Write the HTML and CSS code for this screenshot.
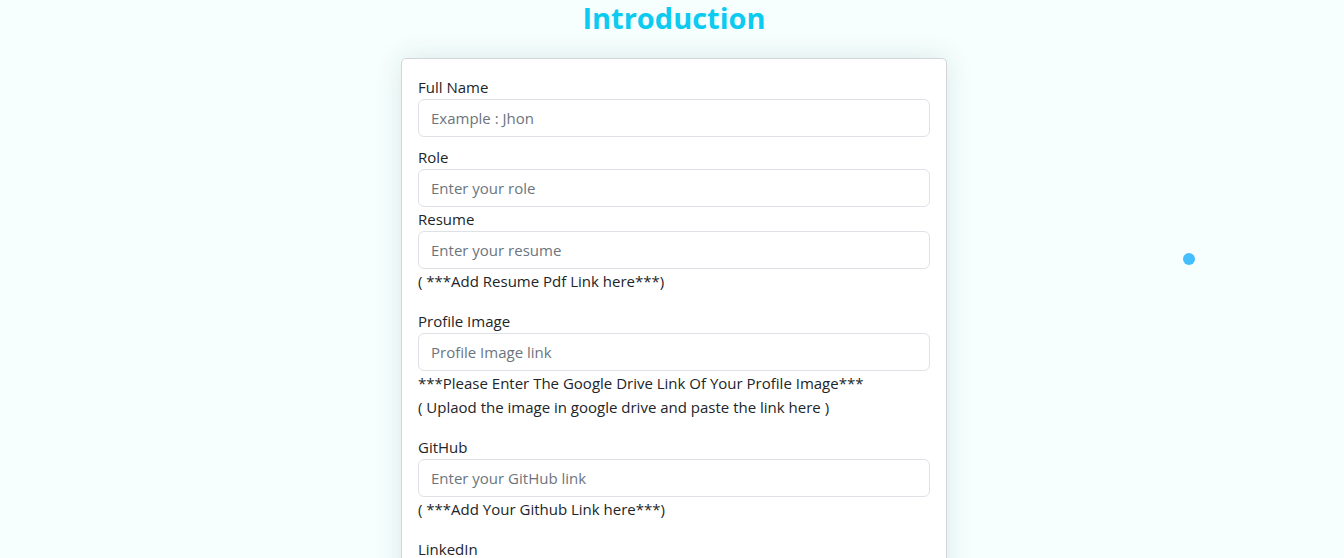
FILE: index.html
```html
<!DOCTYPE html>
<html lang="en">
<head>
<meta charset="utf-8">
<title>Introduction</title>
<link rel="stylesheet" href="styles.css">
</head>
<body>
<h1 class="title">Introduction</h1>
<form class="card">
  <div class="field gap">
    <label class="label">Full Name</label>
    <input class="input" type="text" placeholder="Example : Jhon">
  </div>
  <div class="field">
    <label class="label">Role</label>
    <input class="input" type="text" placeholder="Enter your role">
  </div>
  <div class="field">
    <label class="label">Resume</label>
    <input class="input" type="text" placeholder="Enter your resume">
    <p class="help">( ***Add Resume Pdf Link here***)</p>
  </div>
  <div class="field">
    <label class="label">Profile Image</label>
    <input class="input" type="text" placeholder="Profile Image link">
    <p class="help">***Please Enter The Google Drive Link Of Your Profile Image***<br>( Uplaod the image in google drive and paste the link here )</p>
  </div>
  <div class="field">
    <label class="label">GitHub</label>
    <input class="input" type="text" placeholder="Enter your GitHub link">
    <p class="help">( ***Add Your Github Link here***)</p>
  </div>
  <div class="field">
    <label class="label">LinkedIn</label>
    <input class="input" type="text" placeholder="Enter your LinkedIn link">
  </div>
</form>
<div class="cursor-dot"></div>
</body>
</html>
```
FILE: styles.css
```css
html, body {
  margin: 0;
  padding: 0;
}
body {
  background: #f6fffe;
  font-family: "Open Sans", "Noto Sans", sans-serif;
  font-size: 15px;
  color: #212529;
  overflow: hidden;
  height: 558px;
  padding-left: 4px;
  box-sizing: border-box;
}
.title {
  margin: 0;
  padding-top: 1px;
  height: 36px;
  line-height: 34px;
  text-align: center;
  color: #0dcaf0;
  font-size: 29px;
  font-weight: 700;
}
.card {
  display: block;
  width: 512px;
  margin: 21px auto 0;
  padding: 16px 16px 16px;
  background: #fff;
  border: 1px solid #d3d6d8;
  border-radius: 5px;
  box-shadow: 0 0 28px rgba(0, 60, 60, 0.12);
}
.field {
  display: flex;
  flex-direction: column;
}
.field.gap {
  margin-bottom: 8px;
}
.label {
  display: block;
  line-height: 24px;
  height: 24px;
}
.input {
  box-sizing: border-box;
  width: 100%;
  height: 38px;
  margin: 0;
  padding: 0 12px;
  font-family: inherit;
  font-size: 15px;
  color: #212529;
  background: #fff;
  border: 1px solid #dee2e6;
  border-radius: 6px;
  outline: none;
}
.input::placeholder {
  color: #6c757d;
}
.help {
  margin: 0 0 16px;
  line-height: 24px;
}
.cursor-dot {
  position: absolute;
  left: 1183px;
  top: 253px;
  width: 12px;
  height: 12px;
  border-radius: 50%;
  background: #45befd;
}
```
